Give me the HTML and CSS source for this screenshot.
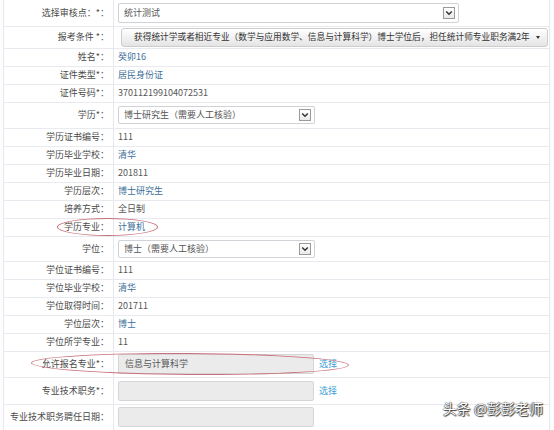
FILE: index.html
```html
<!DOCTYPE html>
<html lang="zh">
<head>
<meta charset="utf-8">
<link rel="stylesheet" href="styles.css">
</head>
<body>
<div class="page">
  <table class="form">
    <tr class="h26">
      <th>选择审核点：*：</th>
      <td><div class="select wide"><span>统计测试</span><i class="arrow"><svg viewBox="0 0 10 10" width="8" height="8"><path d="M1.5 3 L5 6.5 L8.5 3" fill="none" stroke="#333" stroke-width="1.8"/></svg></i></div></td>
    </tr>
    <tr class="h22">
      <th>报考条件 *：</th>
      <td><div class="btn"><span>获得统计学或者相近专业（数学与应用数学、信息与计算科学）博士学位后，担任统计师专业职务满2年</span><i class="caret"></i></div></td>
    </tr>
    <tr><th>姓名*：</th><td class="blue">癸卯16</td></tr>
    <tr><th>证件类型*：</th><td class="blue">居民身份证</td></tr>
    <tr><th>证件号码*：</th><td class="gray">370112199104072531</td></tr>
    <tr class="h26">
      <th>学历*：</th>
      <td><div class="select narrow"><span>博士研究生（需要人工核验）</span><i class="arrow"><svg viewBox="0 0 10 10" width="8" height="8"><path d="M1.5 3 L5 6.5 L8.5 3" fill="none" stroke="#333" stroke-width="1.8"/></svg></i></div></td>
    </tr>
    <tr><th>学历证书编号：</th><td class="gray">111</td></tr>
    <tr><th>学历毕业学校：</th><td class="blue">清华</td></tr>
    <tr><th>学历毕业日期：</th><td class="gray">201811</td></tr>
    <tr><th>学历层次：</th><td class="blue">博士研究生</td></tr>
    <tr><th>培养方式：</th><td class="gray">全日制</td></tr>
    <tr><th>学历专业：</th><td class="blue">计算机</td></tr>
    <tr class="h25">
      <th>学位：</th>
      <td><div class="select narrow"><span>博士（需要人工核验）</span><i class="arrow"><svg viewBox="0 0 10 10" width="8" height="8"><path d="M1.5 3 L5 6.5 L8.5 3" fill="none" stroke="#333" stroke-width="1.8"/></svg></i></div></td>
    </tr>
    <tr><th>学位证书编号：</th><td class="gray">111</td></tr>
    <tr><th>学位毕业学校：</th><td class="blue">清华</td></tr>
    <tr><th>学位取得时间：</th><td class="gray">201711</td></tr>
    <tr><th>学位层次：</th><td class="blue">博士</td></tr>
    <tr><th>学位所学专业：</th><td class="gray">11</td></tr>
    <tr class="h26">
      <th>允许报名专业*：</th>
      <td><div class="field"><div class="input">信息与计算科学</div><a class="link">选择</a></div></td>
    </tr>
    <tr class="h27">
      <th>专业技术职务*：</th>
      <td><div class="field"><div class="input"></div><a class="link">选择</a></div></td>
    </tr>
    <tr class="h26">
      <th>专业技术职务聘任日期：</th>
      <td><div class="field"><div class="input short"></div></div></td>
    </tr>
  </table>
  <div class="ring ring-a"></div>
  <div class="ring ring-b"></div>
  <div class="watermark">头条 @彭彭老师</div>
</div>
</body>
</html>
```

FILE: styles.css
```css
html, body {
  margin: 0;
  padding: 0;
  background: #fdfdfe;
}
body {
  font-family: "Noto Sans CJK SC", "Noto Sans", sans-serif;
  font-size: 9px;
  color: #4a4a4a;
}
.page {
  position: relative;
  width: 554px;
  height: 430px;
  overflow: hidden;
}
.form {
  margin-left: 3px;
  width: 547px;
  border-collapse: collapse;
  background: #fff;
  border-left: 1px solid #e6e8ee;
  border-right: 1px solid #e6e8ee;
}
.form tr {
  height: 18px;
  border-bottom: 1px solid #e8eaef;
}
.form tr.h22 { height: 22px; }
.form tr.h25 { height: 25px; }
.form tr.h26 { height: 26px; }
.form tr.h27 { height: 27px; }
.form th {
  width: 105px;
  padding: 0 4px 0 0;
  text-align: right;
  font-weight: normal;
  color: #4a4a4a;
  white-space: nowrap;
  border-right: 1px solid #e6e8ee;
  line-height: 12px;
}
.form td {
  padding: 0 0 0 4px;
  line-height: 12px;
  white-space: nowrap;
}
.blue { color: #3d6f98; }
.gray { color: #555; }

.select {
  display: flex;
  align-items: center;
  justify-content: space-between;
  height: 18px;
  box-sizing: border-box;
  border: 1px solid #cfd2d6;
  border-radius: 2px;
  background: #fff;
  padding: 0 3px 0 5px;
  color: #555;
}
.select.wide { width: 341px; height: 20px; }
.select.narrow { width: 197px; }
.arrow {
  display: flex;
  align-items: center;
  justify-content: center;
  width: 10px;
  height: 10px;
  border: 1px solid #9a9a9a;
  background: linear-gradient(#fff, #e9e9e9);
}
.btn {
  display: flex;
  align-items: center;
  justify-content: space-between;
  margin-left: 3px;
  width: 427px;
  height: 19px;
  box-sizing: border-box;
  border: 1px solid #cdcdcd;
  border-radius: 3px;
  background: linear-gradient(#ffffff, #e4e4e4);
  padding: 0 7px 0 12px;
  color: #333;
  font-size: 8.7px;
}
.caret {
  width: 0;
  height: 0;
  border-left: 2.5px solid transparent;
  border-right: 2.5px solid transparent;
  border-top: 3px solid #333;
}
.field {
  display: flex;
  align-items: center;
  gap: 5px;
}
.input {
  width: 196px;
  height: 20px;
  box-sizing: border-box;
  border: 1px solid #d6d6d6;
  border-radius: 2px;
  background: #ebebeb;
  padding: 0 6px;
  line-height: 18px;
  color: #555;
}
.link {
  color: #3aa0d8;
}
.ring {
  position: absolute;
  border: 1px solid #c8707a;
  border-radius: 50%;
}
.ring-a {
  left: 57px;
  top: 218px;
  width: 99px;
  height: 16px;
}
.ring-b {
  left: 31px;
  top: 353px;
  width: 316px;
  height: 20px;
  transform: rotate(0.4deg);
}
.watermark {
  position: absolute;
  right: 11px;
  bottom: 12px;
  font-size: 14px;
  color: #fff;
  text-shadow: 0 0 1px #222, 0 0 1px #222, 1px 1px 1px #444;
}
```
